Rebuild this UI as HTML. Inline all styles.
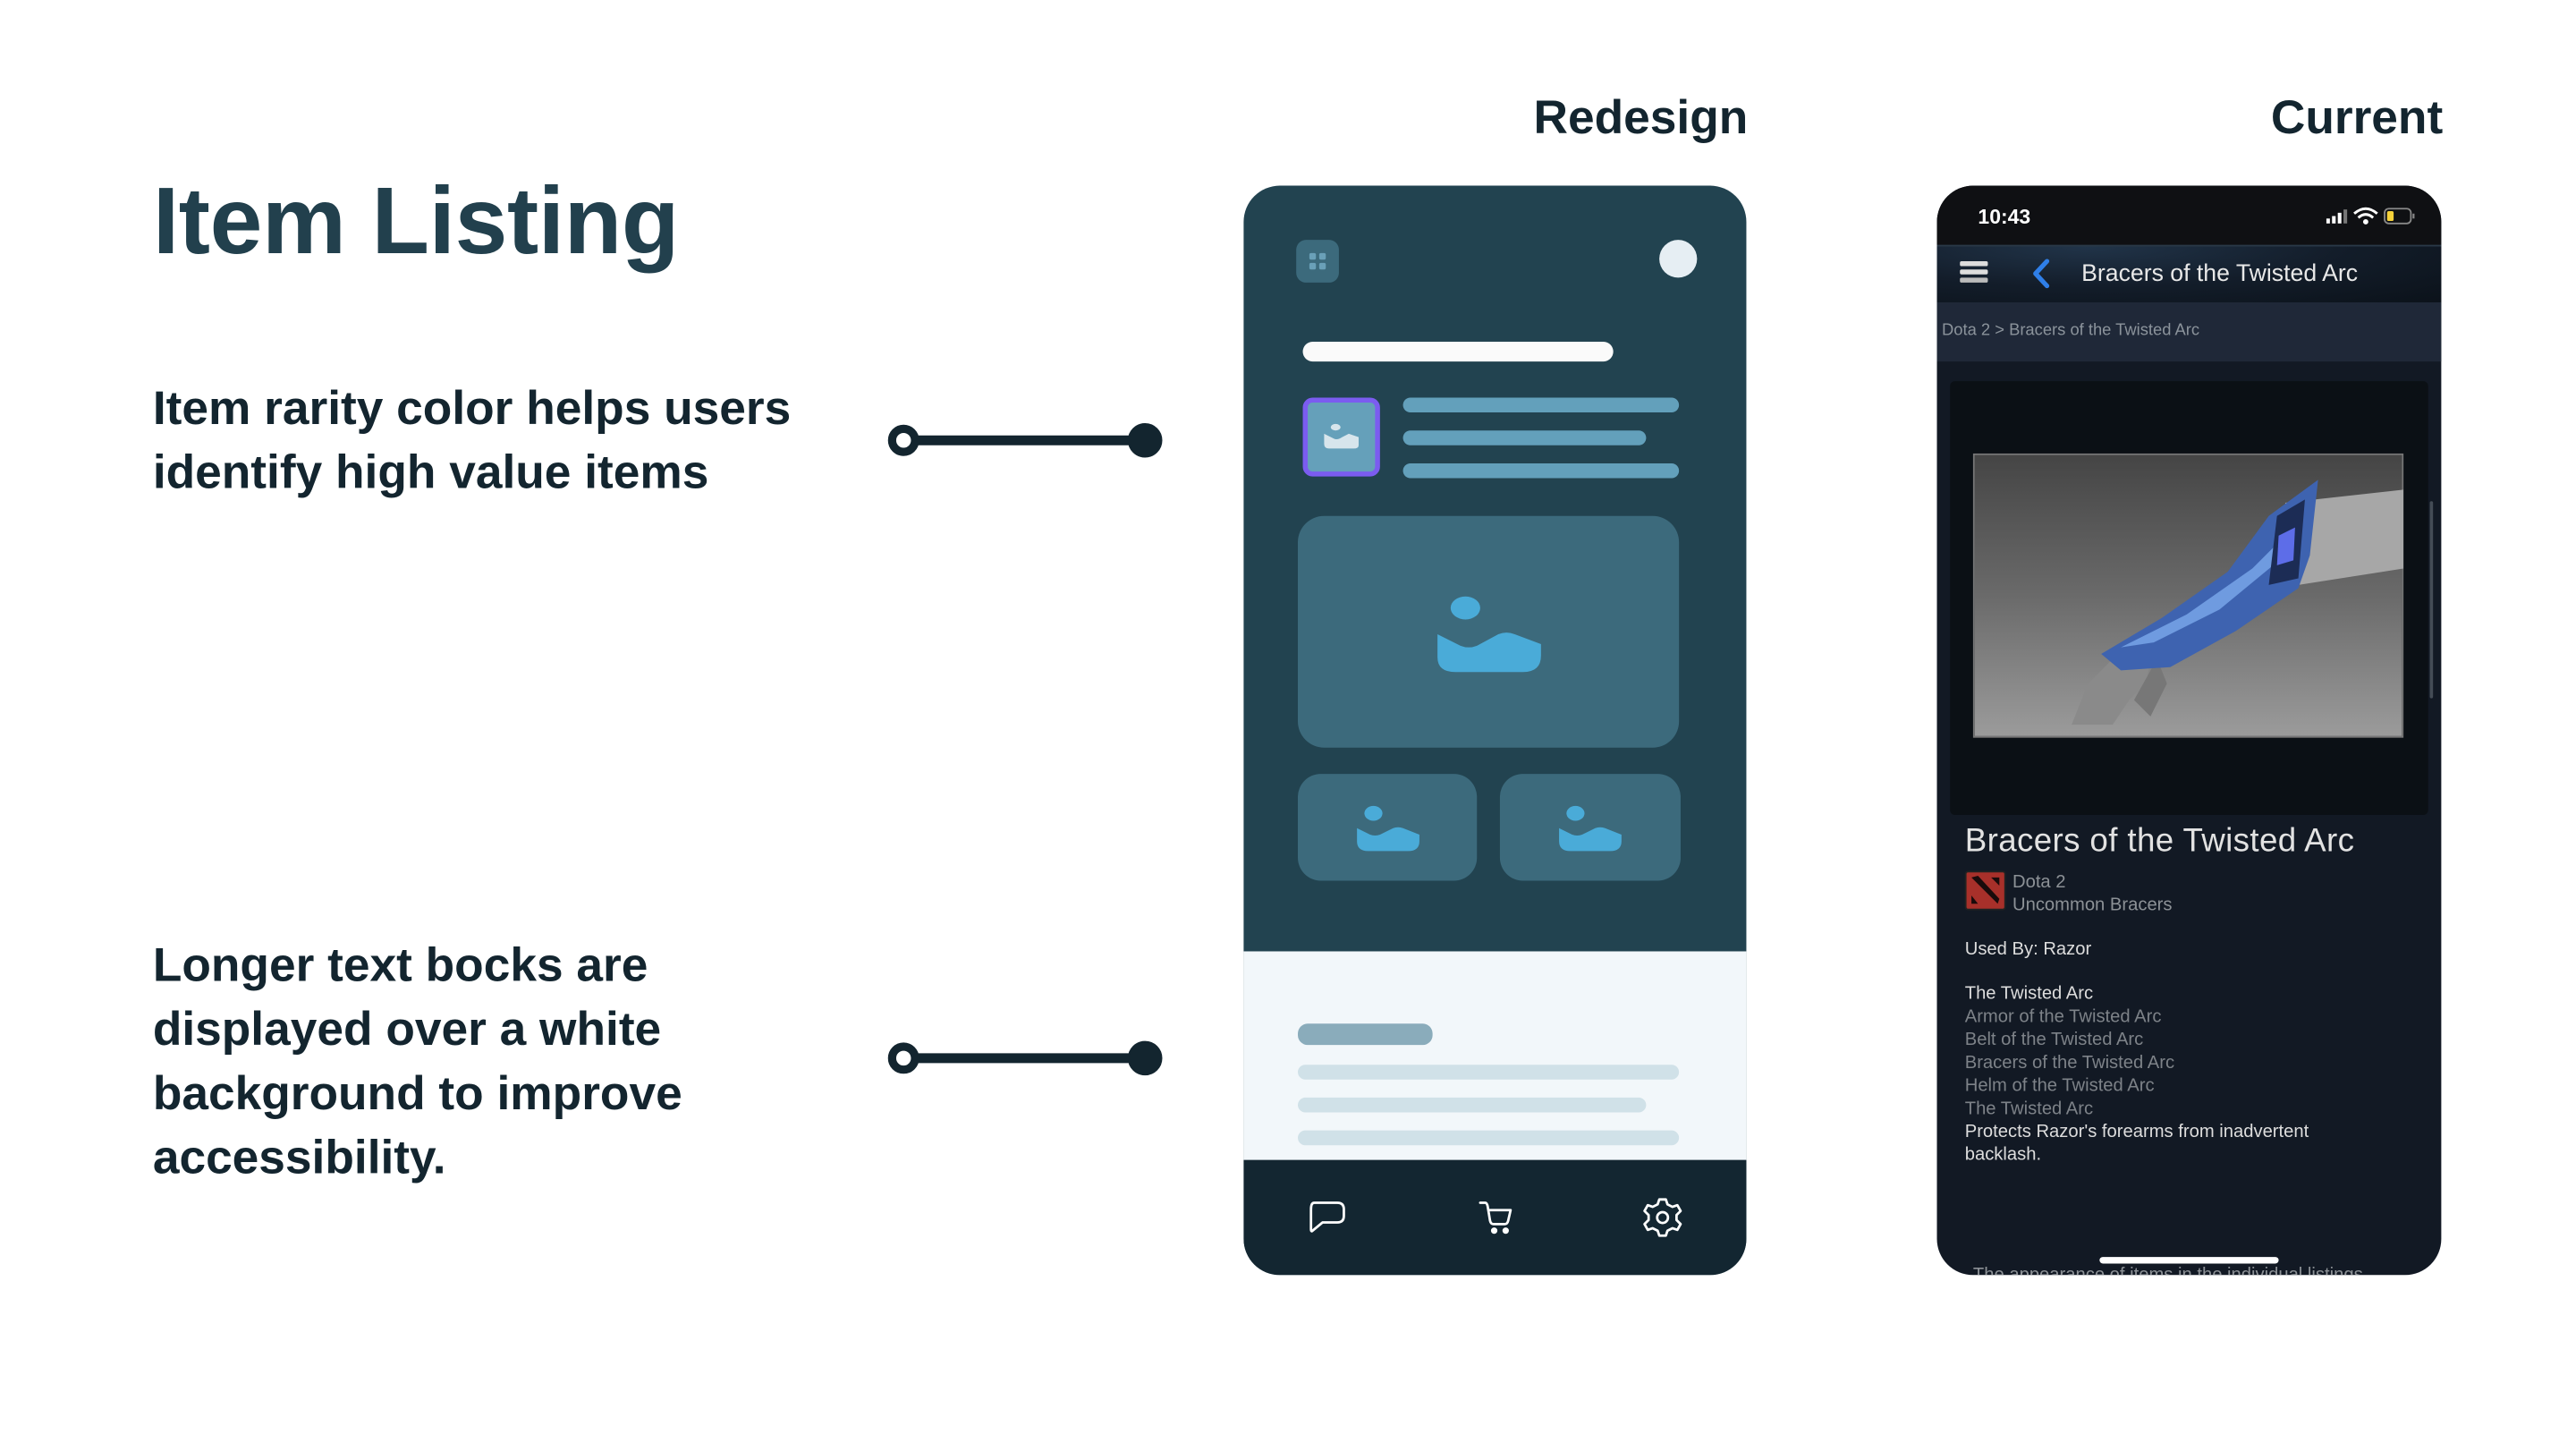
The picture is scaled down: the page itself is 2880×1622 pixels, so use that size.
<!DOCTYPE html>
<html><head><meta charset="utf-8"><style>
*{margin:0;padding:0;box-sizing:border-box}
html,body{width:2880px;height:1621px;overflow:hidden;background:#fff}
#s{position:absolute;left:0;top:0;width:1568px;height:883px;transform:scale(1.83673);transform-origin:0 0;font-family:"Liberation Sans",sans-serif}
.a{position:absolute}
.t{position:absolute;white-space:nowrap}
.h{font-weight:bold;color:#13252f;font-size:29px;line-height:39px}
.bar{position:absolute;border-radius:6px}
</style></head><body><div id="s">
<div class="t" style="left:93px;top:103px;font-size:57.5px;font-weight:bold;color:#22404d;line-height:64px;letter-spacing:-0.2px">Item Listing</div>
<div class="t h" style="left:93px;top:230px">Item rarity color helps users<br>identify high value items</div>
<div class="t h" style="left:93px;top:569px">Longer text bocks are<br>displayed over a white<br>background to improve<br>accessibility.</div>
<div class="t" style="right:504px;top:54px;font-size:29px;font-weight:bold;color:#13252f;line-height:36px">Redesign</div>
<div class="t" style="right:81px;top:54px;font-size:29px;font-weight:bold;color:#13252f;line-height:36px">Current</div>
<svg class="a" style="left:535px;top:250px" width="185" height="410">
<g fill="#13252f" stroke="#13252f"><line x1="15" y1="18" x2="162" y2="18" stroke-width="6"/><circle cx="15" cy="18" r="7" fill="#fff" stroke-width="5"/><circle cx="162" cy="18" r="10"/>
<line x1="15" y1="394" x2="162" y2="394" stroke-width="6"/><circle cx="15" cy="394" r="7" fill="#fff" stroke-width="5"/><circle cx="162" cy="394" r="10"/></g></svg>

<!-- redesign phone -->
<div class="a" style="left:757px;top:113px;width:306px;height:663px;border-radius:22px;overflow:hidden;background:#224350">
 <div class="a" style="left:32px;top:33px;width:26px;height:26px;background:#3c6a7c;border-radius:6px"></div>
 <div class="a" style="left:40px;top:41px;width:4px;height:4px;background:#6aa0b8;border-radius:1px;box-shadow:6px 0 #6aa0b8,0 6px #6aa0b8,6px 6px #6aa0b8"></div>
 <div class="a" style="left:253px;top:33px;width:23px;height:23px;border-radius:50%;background:#e6eef3"></div>
 <div class="bar" style="left:36px;top:95px;width:189px;height:12px;background:#fafafa"></div>
 <div class="a" style="left:36px;top:129px;width:47px;height:48px;background:#65a0ba;border:3px solid #7b5cf0;border-radius:6px"></div>
 <svg class="a" style="left:48px;top:143px" width="24" height="18"><ellipse cx="8" cy="4" rx="3" ry="2" fill="#d7e5ec"/><path d="M1 8 L7 11 Q9 12 12 10 L16 8 L22 10 L22 15 Q22 17 19 17 L4 17 Q1 17 1 14Z" fill="#d7e5ec"/></svg>
 <div class="bar" style="left:97px;top:129px;width:168px;height:9px;background:#63a0bb"></div>
 <div class="bar" style="left:97px;top:149px;width:148px;height:9px;background:#63a0bb"></div>
 <div class="bar" style="left:97px;top:169px;width:168px;height:9px;background:#63a0bb"></div>
 <div class="a" style="left:33px;top:201px;width:232px;height:141px;background:#3c6a7c;border-radius:16px"></div>
 <svg class="a" style="left:117px;top:248px" width="66" height="50"><ellipse cx="18" cy="9" rx="9" ry="7" fill="#4aabd8"/><path d="M1 25 L15 32 Q20 34 25 32 L38 25 Q43 23 48 25 L64 31 L64 38 Q64 48 53 48 L12 48 Q1 48 1 39Z" fill="#4aabd8"/></svg>
 <div class="a" style="left:33px;top:358px;width:109px;height:65px;background:#3c6a7c;border-radius:14px"></div>
 <div class="a" style="left:156px;top:358px;width:110px;height:65px;background:#3c6a7c;border-radius:14px"></div>
 <svg class="a" style="left:68px;top:376px" width="40" height="32"><ellipse cx="11" cy="6" rx="5.5" ry="4.5" fill="#4aabd8"/><path d="M1 15 L9 19 Q12 20 15 19 L23 15 Q26 14 29 15 L39 19 L39 23 Q39 29 32 29 L8 29 Q1 29 1 23Z" fill="#4aabd8"/></svg>
 <svg class="a" style="left:191px;top:376px" width="40" height="32"><ellipse cx="11" cy="6" rx="5.5" ry="4.5" fill="#4aabd8"/><path d="M1 15 L9 19 Q12 20 15 19 L23 15 Q26 14 29 15 L39 19 L39 23 Q39 29 32 29 L8 29 Q1 29 1 23Z" fill="#4aabd8"/></svg>
 <div class="a" style="left:0;top:466px;width:306px;height:127px;background:#f2f7fa"></div>
 <div class="bar" style="left:33px;top:510px;width:82px;height:13px;background:#8aacbb"></div>
 <div class="bar" style="left:33px;top:535px;width:232px;height:9px;background:#d0e1e8"></div>
 <div class="bar" style="left:33px;top:555px;width:212px;height:9px;background:#d0e1e8"></div>
 <div class="bar" style="left:33px;top:575px;width:232px;height:9px;background:#d0e1e8"></div>
 <div class="a" style="left:0;top:593px;width:306px;height:70px;background:#132631"></div>
 <svg class="a" style="left:38px;top:616px" width="26" height="26" fill="none" stroke="#fff" stroke-width="1.5" stroke-linejoin="round"><path d="M5 3 H19 Q23 3 23 7 V11 Q23 15 19 15 H10 L4 20 Q3 21 3 19 V7 Q3 3 5 3Z"/></svg>
 <svg class="a" style="left:141px;top:616px" width="26" height="26" fill="none" stroke="#fff" stroke-width="1.5" stroke-linejoin="round" stroke-linecap="round"><path d="M3 3 H6 Q7 3 7.5 5 L9 14 Q9.5 16 11 16 H18 Q19.5 16 20 14 L21.5 7.5 H8"/><circle cx="11.5" cy="20" r="1.2" fill="#fff"/><circle cx="18.5" cy="20" r="1.2" fill="#fff"/></svg>
 <svg class="a" style="left:242px;top:615px" width="26" height="26" fill="none" stroke="#fff" stroke-width="1.5" stroke-linejoin="round"><path d="M11 2 H15 L16 5 L19 6.5 L22 5.5 L24 9 L21.5 11.5 V14.5 L24 17 L22 20.5 L19 19.5 L16 21 L15 24 H11 L10 21 L7 19.5 L4 20.5 L2 17 L4.5 14.5 V11.5 L2 9 L4 5.5 L7 6.5 L10 5Z"/><circle cx="13" cy="13" r="3.3"/></svg>
</div>

<!-- current phone -->
<div class="a" style="left:1179px;top:113px;width:307px;height:663px;border-radius:22px;overflow:hidden;background:#121924;color:#ddd">
 <div class="a" style="left:0;top:0;width:307px;height:36px;background:#0f1013"></div>
 <div class="t" style="left:25px;top:11px;font-size:12.5px;font-weight:bold;color:#fff;line-height:16px">10:43</div>
 <svg class="a" style="left:237px;top:12px" width="60" height="14"><rect x="0" y="8" width="2.2" height="3" fill="#fff"/><rect x="3.5" y="6.5" width="2.2" height="4.5" fill="#fff"/><rect x="7" y="4.5" width="2.2" height="6.5" fill="#fff"/><rect x="10.5" y="2.5" width="2.2" height="8.5" fill="#777"/><path d="M17 5 Q24 -1 31 5 M19.5 7.5 Q24 3.5 28.5 7.5" stroke="#fff" stroke-width="1.6" fill="none"/><circle cx="24" cy="10" r="1.6" fill="#fff"/><rect x="35.5" y="2" width="16" height="9" rx="2.5" fill="none" stroke="#888" stroke-width="1"/><rect x="37" y="3.5" width="4" height="6" rx="1" fill="#f5d13a"/><rect x="52.5" y="5" width="1.2" height="3" fill="#888"/></svg>
 <div class="a" style="left:0;top:36px;width:307px;height:35px;background:radial-gradient(ellipse at 30% 0%,#213449 0%,#131d2a 50%,#0b121a 100%);border-top:1px solid #2a3847"></div>
 <div class="a" style="left:14px;top:46px;width:17px;height:3px;background:#ddd;border-radius:1px;box-shadow:0 5px #ddd,0 10px #bbb"></div>
 <svg class="a" style="left:57px;top:44px" width="14" height="20"><path d="M10 2 L3 9.5 L10 17" stroke="#2f7fe8" stroke-width="2.8" fill="none" stroke-linecap="round" stroke-linejoin="round"/></svg>
 <div class="t" style="left:88px;top:45px;font-size:14.5px;color:#e8e8e8;line-height:18px">Bracers of the Twisted Arc</div>
 <div class="a" style="left:0;top:71px;width:307px;height:36px;background:#1f2838"></div>
 <div class="t" style="left:3px;top:82px;font-size:10px;color:#8b939b;line-height:13px">Dota 2 &gt; Bracers of the Twisted Arc</div>
 <div class="a" style="left:8px;top:119px;width:291px;height:264px;background:#0b1015;border-radius:3px"></div>
 <div class="a" style="left:22px;top:163px;width:262px;height:173px;background:linear-gradient(#454545,#6a6a6a 50%,#9b9b9b);border:1px solid #777"></div>
 <svg class="a" style="left:22px;top:163px" width="262" height="173">
  <path d="M190 30 L262 22 L262 70 L198 80Z" fill="#a7a7a7"/>
  <path d="M60 165 L70 140 L90 120 L110 118 L105 140 L95 150 L85 165Z" fill="#8a8a8a"/>
  <path d="M98 150 L112 125 L118 140 L108 160Z" fill="#777"/>
  <path d="M78 122 L115 100 L155 72 L180 38 L210 16 L205 62 L198 82 L160 108 L120 130 L90 132Z" fill="#3e63b0"/>
  <path d="M90 118 L130 98 L170 70 L195 45 L190 62 L150 95 L110 115Z" fill="#6f9be0"/>
  <path d="M185 38 L202 28 L198 76 L180 80Z" fill="#1c2c55"/>
  <path d="M186 50 L196 45 L195 65 L185 68Z" fill="#5d6de8"/>
 </svg>
 <div class="a" style="left:300px;top:192px;width:2px;height:120px;background:#444c56;border-radius:1px"></div>
 <div class="t" style="left:17px;top:387px;font-size:20px;color:#e2e2e2;line-height:24px;letter-spacing:0.2px">Bracers of the Twisted Arc</div>
 <div class="a" style="left:17px;top:417px;width:25px;height:24px;background:#a8302a;border:1.5px solid #222;border-radius:2px"></div>
 <svg class="a" style="left:17px;top:417px" width="25" height="24"><path d="M4 4 L8 3 L21 17 L20 20Z" fill="#1a0b0b"/><path d="M16 4 L21 4 L21 9Z M4 15 L8 20 L4 20Z" fill="#1a0b0b"/></svg>
 <div class="t" style="left:46px;top:417px;font-size:11px;color:#8c9196;line-height:14px">Dota 2<br>Uncommon Bracers</div>
 <div class="t" style="left:17px;top:458px;font-size:11px;color:#ddd;line-height:14px">Used By: Razor</div>
 <div class="t" style="left:17px;top:485px;font-size:11px;color:#ddd;line-height:14px">The Twisted Arc</div>
 <div class="t" style="left:17px;top:499px;font-size:11px;color:#7d8288;line-height:14px">Armor of the Twisted Arc<br>Belt of the Twisted Arc<br>Bracers of the Twisted Arc<br>Helm of the Twisted Arc<br>The Twisted Arc</div>
 <div class="t" style="left:17px;top:569px;font-size:11px;color:#ddd;line-height:14px">Protects Razor's forearms from inadvertent<br>backlash.</div>
 <div class="t" style="left:22px;top:656px;font-size:11px;color:#8c9196;line-height:14px">The appearance of items in the individual listings</div>
 <div class="a" style="left:99px;top:652px;width:109px;height:4px;background:#fff;border-radius:2px"></div>
</div>
</div></body></html>
